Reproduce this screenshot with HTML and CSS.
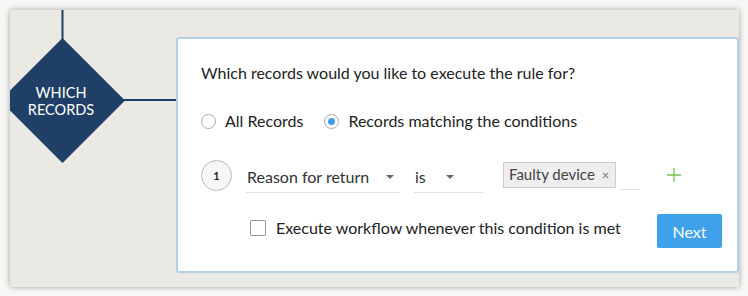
FILE: index.html
```html
<!DOCTYPE html>
<html lang="en">
<head>
    <meta charset="UTF-8">
    <title>Workflow rule</title>
    <link rel="stylesheet" href="styles.css">
</head>
<body>
    <div class="board">
        <div class="node-col">
            <svg class="node" width="166" height="277" viewBox="0 0 166 277">
                <line x1="52.5" y1="0" x2="52.5" y2="30" stroke="#1f3f66" stroke-width="2"/>
                <line x1="112" y1="90" x2="166" y2="90" stroke="#1f3f66" stroke-width="2"/>
                <polygon points="52.5,28 115,90.5 52.5,153 -10,90.5" fill="#1f3f66"/>
                <text x="51" y="88" text-anchor="middle" class="node-text">WHICH</text>
                <text x="51" y="104.5" text-anchor="middle" class="node-text">RECORDS</text>
            </svg>
        </div>
        <div class="card">
            <p class="question">Which records would you like to execute the rule for?</p>
            <div class="radios">
                <label class="radio"><span class="dot"></span>All Records</label>
                <label class="radio"><span class="dot on"></span>Records matching the conditions</label>
            </div>
            <div class="condition">
                <span class="num">1</span>
                <div class="select field-wide">Reason for return<span class="caret"></span></div>
                <div class="select field-small">is<span class="caret"></span></div>
                <div class="value">
                    <span class="tag">Faulty device <span class="x">&times;</span></span>
                    <span class="value-line"></span>
                </div>
                <svg class="plus" width="14" height="14" viewBox="0 0 14 14">
                    <path d="M7 0v14M0 7h14" stroke="#7cc04a" stroke-width="1.3" fill="none"/>
                </svg>
            </div>
            <div class="footer">
                <label class="check"><span class="box"></span>Execute workflow whenever this condition is met</label>
                <button class="next">Next</button>
            </div>
        </div>
    </div>
</body>
</html>
```

FILE: styles.css
```css
body {
    margin: 0;
    background: #f7f7f6;
    font-family: 'Lato', 'Open Sans', sans-serif;
    color: #222;
}
.board {
    margin: 10px;
    width: 729px;
    height: 277px;
    background: #ebe9e3;
    box-shadow: 0 0 6px rgba(0, 0, 0, 0.35);
    display: flex;
    overflow: hidden;
}
.node-col {
    width: 166px;
    flex: none;
}
.node {
    display: block;
}
.node-text {
    fill: #fff;
    font-family: 'Lato', sans-serif;
    font-size: 14.5px;
}
.card {
    margin-top: 27px;
    width: 553px;
    height: 232px;
    background: #fff;
    border: 2px solid #b3d0ea;
    border-radius: 3px;
    padding: 0 0 0 23px;
    box-sizing: content-box;
}
.question {
    margin: 24px 0 0;
    font-size: 16px;
    line-height: 20px;
}
.radios {
    display: flex;
    gap: 21px;
    margin-top: 28px;
}
.radio {
    display: flex;
    align-items: center;
    gap: 9px;
    font-size: 16px;
    line-height: 20px;
}
.dot {
    width: 13px;
    height: 13px;
    border: 1px solid #aaa;
    border-radius: 50%;
    position: relative;
}
.dot.on::after {
    content: '';
    position: absolute;
    left: 3px;
    top: 3px;
    width: 7px;
    height: 7px;
    border-radius: 50%;
    background: #3b9ef2;
}
.condition {
    display: flex;
    align-items: center;
    margin-top: 28px;
    height: 32px;
}
.num {
    width: 29px;
    height: 29px;
    border: 1px solid #bbb;
    border-radius: 50%;
    background: #f7f7f7;
    font-size: 11px;
    font-weight: bold;
    display: flex;
    align-items: center;
    justify-content: center;
    margin-right: 14px;
}
.select {
    position: relative;
    font-size: 16px;
    line-height: 20px;
    padding: 4px 0 5px 1px;
    border-bottom: 1px solid #e2e2e2;
    color: #333;
    margin-top: 6px;
}
.field-wide {
    width: 153px;
    margin-right: 14px;
}
.field-small {
    width: 69px;
    margin-right: 19px;
}
.caret {
    position: absolute;
    right: 6px;
    top: 12px;
    border-left: 4px solid transparent;
    border-right: 4px solid transparent;
    border-top: 4px solid #666;
}
.field-small .caret {
    right: 30px;
}
.value {
    display: flex;
    align-items: flex-end;
    gap: 5px;
}
.tag {
    background: #eee;
    border: 1px solid #ccc;
    font-size: 15px;
    line-height: 23px;
    padding: 0 6px 0 5px;
    color: #444;
}
.x {
    font-size: 13px;
    color: #777;
    margin-left: 3px;
}
.value-line {
    width: 19px;
    border-bottom: 1px solid #e2e2e2;
    margin-bottom: -2px;
}
.plus {
    margin-left: 27px;
}
.footer {
    display: flex;
    align-items: center;
    justify-content: space-between;
    margin-top: 23px;
    padding-left: 49px;
    padding-right: 15px;
}
.check {
    display: flex;
    align-items: center;
    gap: 10px;
    font-size: 16px;
    line-height: 20px;
    margin-top: -6px;
}
.box {
    width: 14px;
    height: 14px;
    border: 1px solid #999;
    border-radius: 1px;
}
.next {
    width: 65px;
    height: 34px;
    background: #3ea1ea;
    color: #fff;
    border: none;
    border-radius: 2px;
    font-family: 'Lato', sans-serif;
    font-size: 16px;
}
```
